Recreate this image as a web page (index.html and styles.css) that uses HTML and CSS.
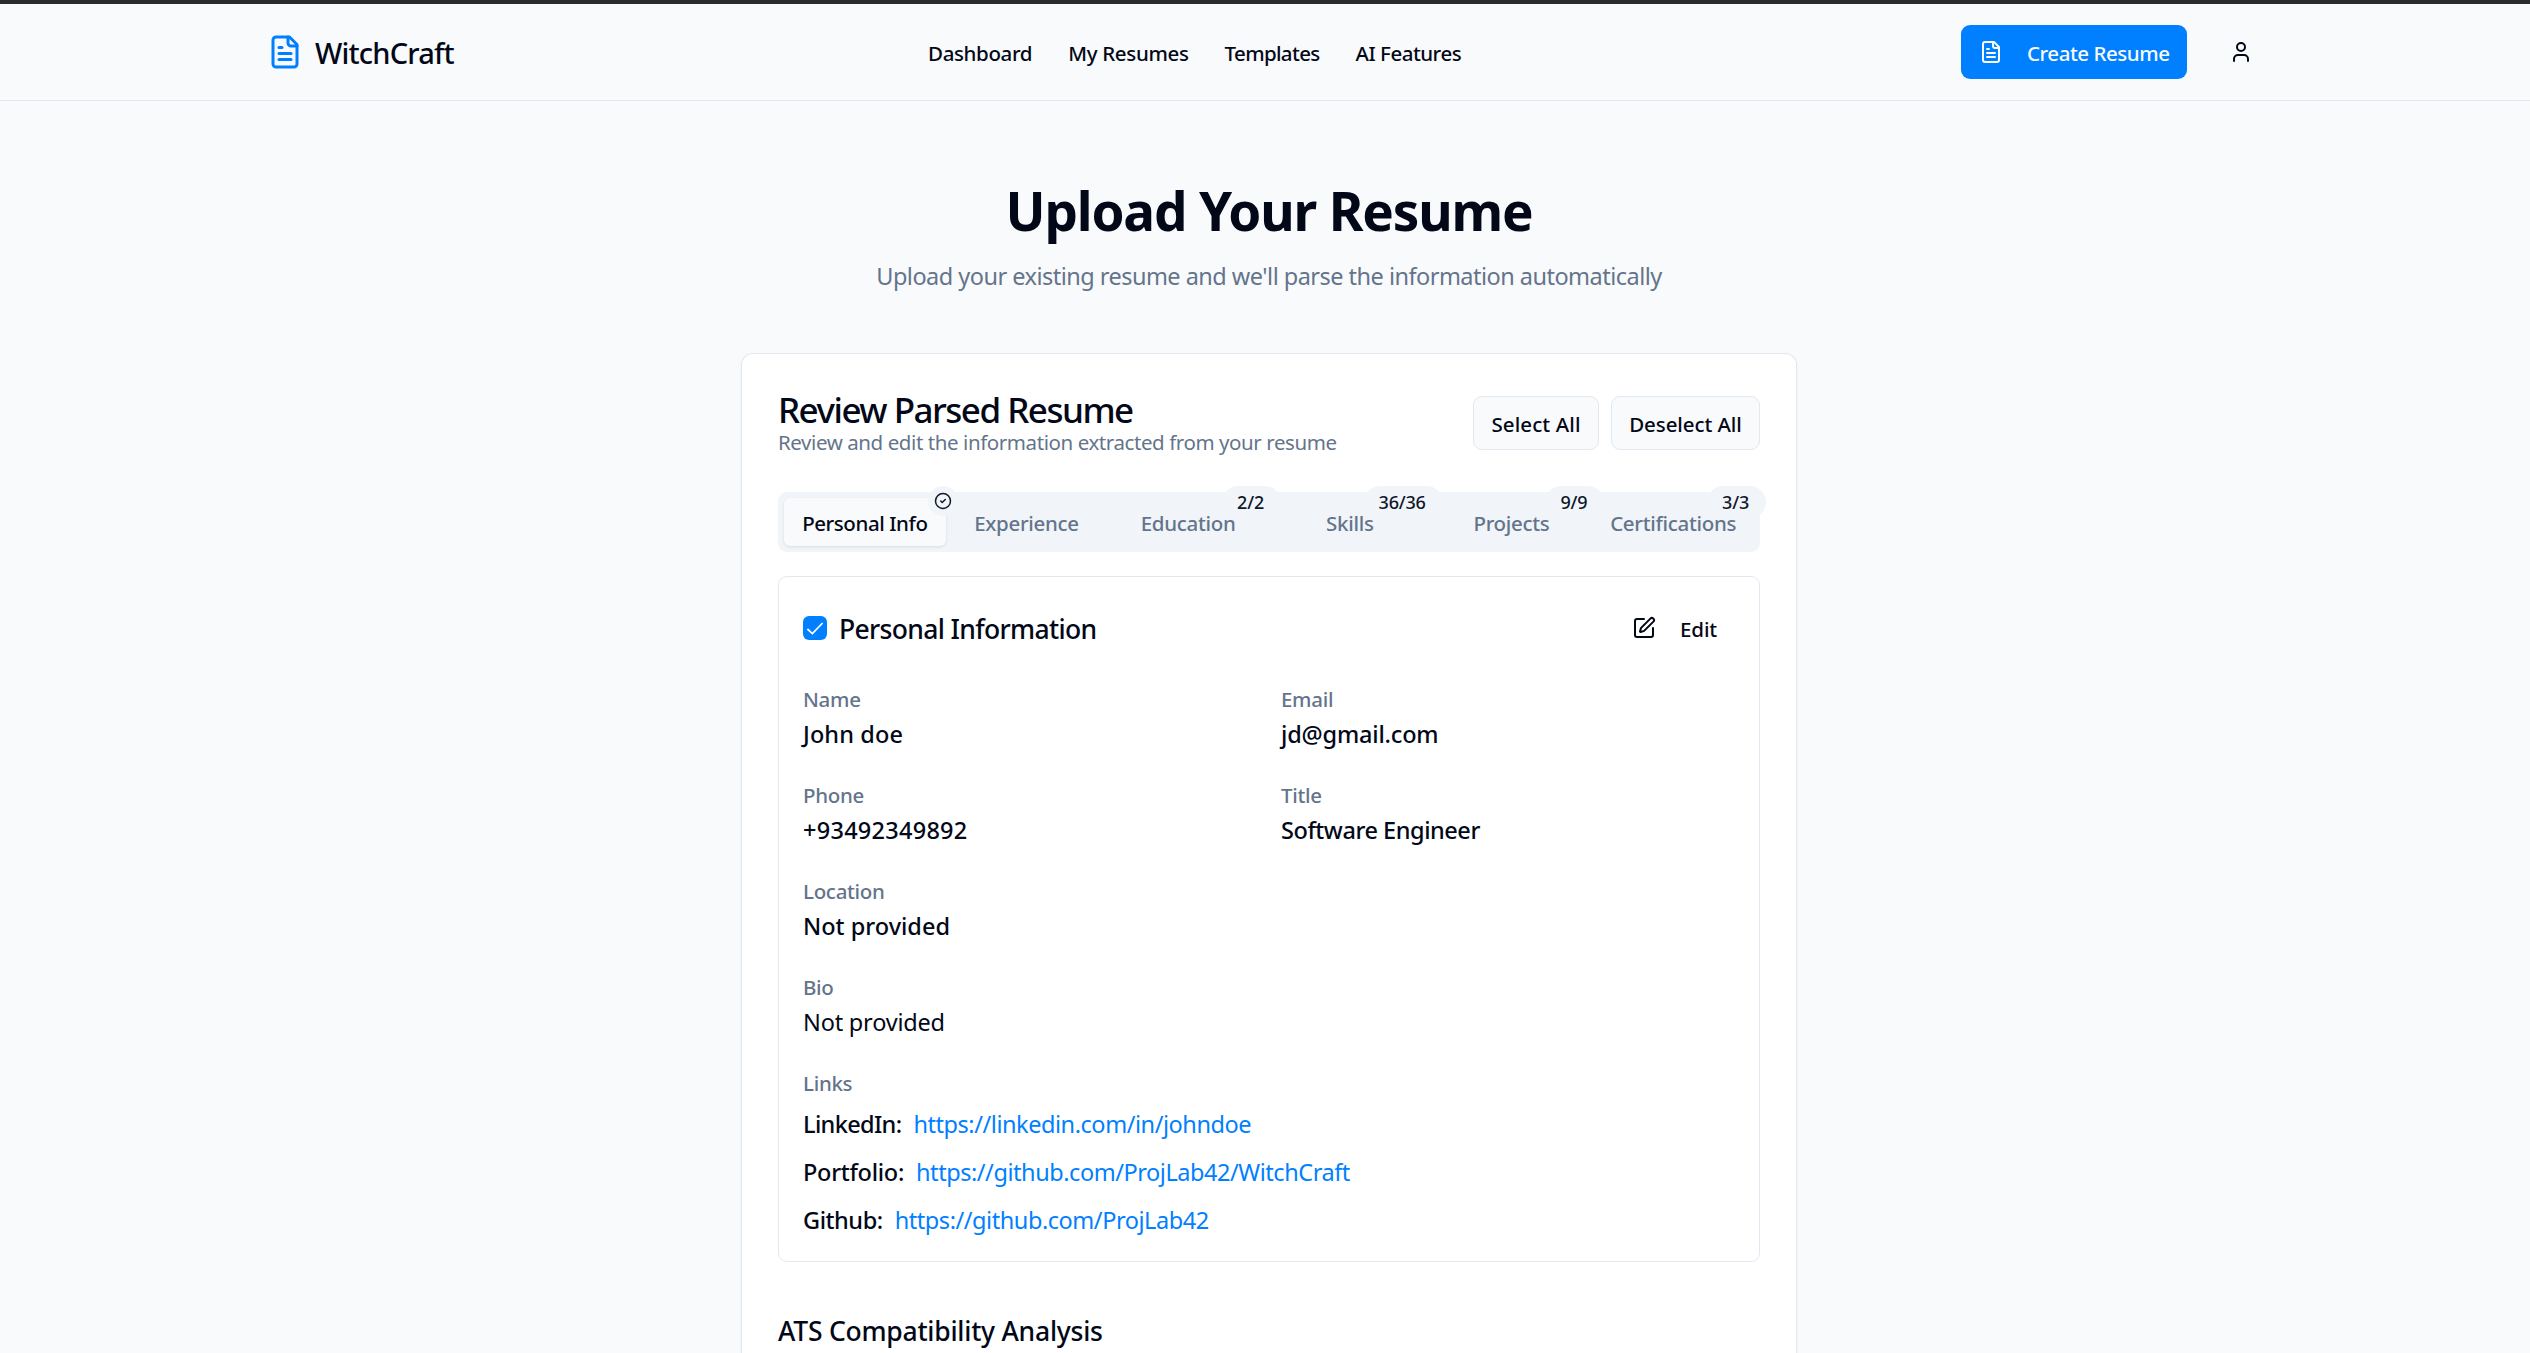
FILE: index.html
```
<!DOCTYPE html>
<html lang="en">
<head>
<meta charset="utf-8">
<title>WitchCraft</title>
<link rel="stylesheet" href="styles.css">
</head>
<body>
<svg class="sprite" aria-hidden="true">
  <symbol id="file-text" viewBox="0 0 24 24">
    <path d="M15 2H6a2 2 0 0 0-2 2v16a2 2 0 0 0 2 2h12a2 2 0 0 0 2-2V7Z"/>
    <path d="M14 2v4a2 2 0 0 0 2 2h4"/>
    <path d="M10 9H8"/><path d="M16 13H8"/><path d="M16 17H8"/>
  </symbol>
  <symbol id="user" viewBox="0 0 24 24">
    <path d="M19 21v-2a4 4 0 0 0-4-4H9a4 4 0 0 0-4 4v2"/>
    <circle cx="12" cy="7" r="4"/>
  </symbol>
  <symbol id="circle-check" viewBox="0 0 24 24">
    <circle cx="12" cy="12" r="10"/><path d="m9 12 2 2 4-4"/>
  </symbol>
  <symbol id="square-pen" viewBox="0 0 24 24">
    <path d="M12 3H5a2 2 0 0 0-2 2v14a2 2 0 0 0 2 2h14a2 2 0 0 0 2-2v-7"/>
    <path d="M18.375 2.625a1 1 0 0 1 3 3l-9.013 9.014a2 2 0 0 1-.853.505l-2.873.84a.5.5 0 0 1-.62-.62l.84-2.873a2 2 0 0 1 .506-.852z"/>
  </symbol>
</svg>

<header class="topbar">
  <div class="container">
    <a class="brand"><svg class="icon brand-icon"><use href="#file-text"/></svg><span class="brand-name">WitchCraft</span></a>
    <nav class="nav">
      <a class="nav-dashboard">Dashboard</a>
      <a class="nav-resumes">My Resumes</a>
      <a class="nav-templates">Templates</a>
      <a class="nav-ai">AI Features</a>
    </nav>
    <div class="actions">
      <a class="create"><svg class="icon"><use href="#file-text"/></svg><span>Create Resume</span></a>
      <a class="account"><svg class="icon"><use href="#user"/></svg></a>
    </div>
  </div>
</header>

<main class="main">
  <h1 class="title">Upload Your Resume</h1>
  <p class="subtitle">Upload your existing resume and we'll parse the information automatically</p>

  <section class="card">
    <div class="card-head">
      <div>
        <h2 class="card-title">Review Parsed Resume</h2>
        <p class="card-desc">Review and edit the information extracted from your resume</p>
      </div>
      <div class="card-actions">
        <button class="button select">Select All</button>
        <button class="button deselect">Deselect All</button>
      </div>
    </div>

    <div class="tabs">
      <div class="tab active"><span>Personal Info</span><i class="badge badge-icon"><svg class="icon"><use href="#circle-check"/></svg></i></div>
      <div class="tab"><span>Experience</span></div>
      <div class="tab"><span>Education</span><i class="badge">2/2</i></div>
      <div class="tab"><span>Skills</span><i class="badge">36/36</i></div>
      <div class="tab"><span>Projects</span><i class="badge">9/9</i></div>
      <div class="tab"><span>Certifications</span><i class="badge">3/3</i></div>
    </div>

    <div class="panel">
      <div class="panel-head">
        <span class="checkbox"><svg viewBox="0 0 24 24"><path d="M4.4 13 9.4 17.6 19.6 7"/></svg></span>
        <h3 class="panel-title">Personal Information</h3>
        <a class="edit"><svg class="icon"><use href="#square-pen"/></svg><span>Edit</span></a>
      </div>
      <div class="fields">
        <div><div class="label">Name</div><div class="value value-name">John doe</div></div>
        <div><div class="label">Email</div><div class="value value-email">jd@gmail.com</div></div>
        <div><div class="label">Phone</div><div class="value value-phone">+93492349892</div></div>
        <div><div class="label">Title</div><div class="value value-title">Software Engineer</div></div>
        <div class="wide"><div class="label">Location</div><div class="value">Not provided</div></div>
        <div class="wide"><div class="label">Bio</div><div class="value plain">Not provided</div></div>
        <div class="wide">
          <div class="label">Links</div>
          <div class="links">
            <div class="link linkedin"><b>LinkedIn:</b><a>https://linkedin.com/in/johndoe</a></div>
            <div class="link portfolio"><b>Portfolio:</b><a>https://github.com/ProjLab42/WitchCraft</a></div>
            <div class="link"><b>Github:</b><a>https://github.com/ProjLab42</a></div>
          </div>
        </div>
      </div>
    </div>

    <h3 class="section-title">ATS Compatibility Analysis</h3>
  </section>
</main>
</body>
</html>
```
FILE: styles.css
```
* { box-sizing: border-box; }
html, body { height: 100%; margin: 0; overflow: hidden; }
body {
  background: #f9fafc;
  color: #020817;
  font: 500 20.5px/30px "Noto Sans", "Open Sans", sans-serif;
}
h1, h2, h3, p { margin: 0; }
.sprite { display: none; }
.icon {
  display: block;
  flex: none;
  width: 24px;
  height: 24px;
  fill: none;
  stroke: currentColor;
  stroke-width: 2;
  stroke-linecap: round;
  stroke-linejoin: round;
}

.topbar {
  height: 101px;
  padding-left: 8px;
  border-top: 4px solid #2b2b2b;
  border-bottom: 1px solid #dfe7f1;
}
.container {
  display: flex;
  align-items: center;
  width: 2100px;
  height: 96px;
  margin: 0 auto;
  padding: 0 48px;
}
.brand { display: flex; align-items: center; gap: 12px; width: 187px; }
.brand-icon { width: 36px; height: 36px; color: #0080ff; }
.brand-name { padding-top: 1px; font-size: 29px; line-height: 42px; letter-spacing: -.8px; }
.nav { display: flex; gap: 36px; margin-left: 474px; padding-top: 2px; white-space: nowrap; }
.nav-dashboard { letter-spacing: -.36px; }
.nav-resumes { letter-spacing: -.33px; }
.nav-templates { letter-spacing: -.65px; }
.nav-ai { letter-spacing: -.5px; }
.actions { display: flex; align-items: center; gap: 24px; margin-left: auto; }
.create {
  display: flex;
  align-items: center;
  gap: 24px;
  width: 226px;
  height: 54px;
  padding: 0 18px;
  border-radius: 9px;
  background: #0080ff;
  color: #f8fafc;
  letter-spacing: -.46px;
  white-space: nowrap;
}
.create span, .edit span { padding-top: 2px; }
.account { display: grid; place-items: center; width: 60px; height: 60px; }

.main { padding: 80px 0 0 8px; }
.title {
  font-size: 53px;
  font-weight: 700;
  line-height: 60px;
  letter-spacing: -1.16px;
  text-align: center;
}
.subtitle {
  margin-top: 17px;
  color: #64748b;
  font-size: 23.5px;
  font-weight: 400;
  line-height: 36px;
  letter-spacing: -.52px;
  text-align: center;
}
.card {
  width: 1056px;
  height: 1000px;
  margin: 59px auto 0;
  padding: 36px 36px 0;
  border: 1px solid #e2e8f0;
  border-bottom: 0;
  border-radius: 12px 12px 0 0;
  background: #fff;
  box-shadow: 0 1px 3px rgba(0, 0, 0, .05);
}
.card-head { display: flex; align-items: center; justify-content: space-between; height: 66px; }
.card-title { padding-top: 2px; font-size: 35px; font-weight: 500; line-height: 37px; letter-spacing: -1.5px; }
.card-desc { color: #64748b; font-weight: 400; line-height: 29px; letter-spacing: -.42px; }
.card-actions { display: flex; gap: 12px; }
.button {
  height: 54px;
  padding: 2px 0 0;
  border: 1px solid #e2e8f0;
  border-radius: 9px;
  background: #f9fafc;
  color: inherit;
  font: inherit;
}
.select { width: 126px; letter-spacing: .1px; }
.deselect { width: 149px; letter-spacing: -.08px; }

.tabs {
  display: grid;
  grid-template-columns: repeat(6, 1fr);
  height: 60px;
  margin-top: 36px;
  padding: 6px;
  border-radius: 9px;
  background: #f1f5f9;
  color: #64748b;
}
.tab {
  position: relative;
  display: flex;
  align-items: center;
  justify-content: center;
  padding-top: 1px;
  border-radius: 6px;
  letter-spacing: -.3px;
}
.active { background: #f9fafc; color: #020817; box-shadow: 0 1px 3px rgba(0, 0, 0, .1); letter-spacing: -.42px; }
.badge {
  position: absolute;
  top: -12px;
  right: -12px;
  height: 32px;
  padding: 0 17px 0 15px;
  border-radius: 16px;
  background: #f1f5f9;
  color: #0f172a;
  font-size: 18px;
  font-style: normal;
  line-height: 32px;
  letter-spacing: -.2px;
}
.badge-icon { display: grid; place-items: center; width: 30px; height: 30px; padding: 0; }
.badge-icon .icon { width: 18px; height: 18px; }

.panel {
  margin-top: 24px;
  padding: 24px 24px 23px;
  border: 1px solid #e2e8f0;
  border-radius: 9px;
}
.panel-head { display: flex; align-items: center; height: 54px; }
.checkbox { width: 24px; height: 24px; border-radius: 6px; background: #0080ff; }
.checkbox svg { display: block; fill: none; stroke: #fff; stroke-width: 1.7; }
.panel-title { margin-left: 12px; padding-top: 2px; font-size: 26.5px; font-weight: 500; line-height: 42px; letter-spacing: -.66px; }
.edit { display: flex; align-items: center; gap: 24px; margin-left: auto; padding-right: 18px; letter-spacing: -.15px; }
.fields { display: grid; grid-template-columns: 1fr 1fr; gap: 28px 24px; margin-top: 29px; }
.wide { grid-column: 1 / -1; }
.label { color: #64748b; letter-spacing: -.3px; }
.value { margin-top: 2px; font-size: 23.5px; line-height: 36px; }
.value-name { letter-spacing: .1px; }
.value-email { letter-spacing: -.18px; }
.value-phone { letter-spacing: .27px; }
.value-title { letter-spacing: -.45px; }
.plain { font-weight: 400; letter-spacing: -.2px; }
.links { display: grid; gap: 12px; margin-top: 8px; }
.link { display: flex; gap: 12px; font-size: 23.5px; line-height: 36px; letter-spacing: -.45px; }
.link b { font-weight: 500; }
.link a { color: #0080ff; font-weight: 400; }
.linkedin b { letter-spacing: -.65px; }
.portfolio b { letter-spacing: -.28px; }
.section-title { margin-top: 47px; padding-top: 2px; font-size: 26.5px; font-weight: 500; line-height: 41px; letter-spacing: -.24px; }
```
